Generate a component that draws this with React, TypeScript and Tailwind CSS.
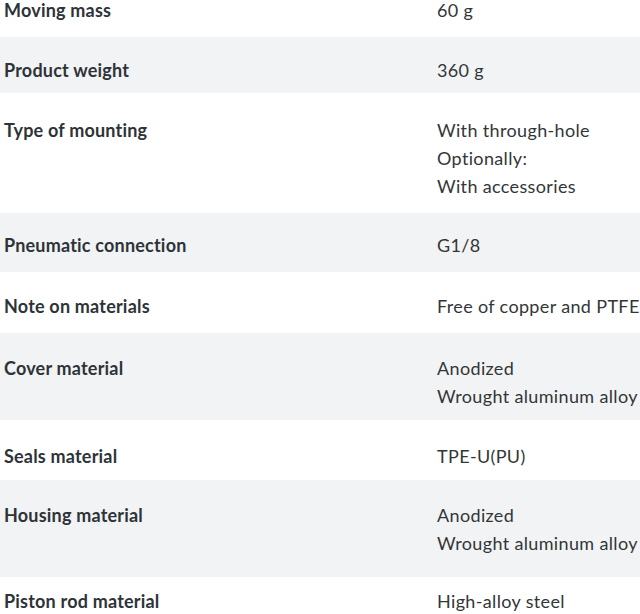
const ROWS = [
  { label: "Moving mass", value: ["60 g"], pad: "pt-0 pb-[13px]", bg: "bg-white" },
  { label: "Product weight", value: ["360 g"], pad: "pt-[19px] pb-[9px]", bg: "bg-[#f2f3f5]" },
  {
    label: "Type of mounting",
    value: ["With through-hole", "Optionally:", "With accessories"],
    pad: "pt-[23px] pb-[13px]",
    bg: "bg-white",
  },
  { label: "Pneumatic connection", value: ["G1/8"], pad: "pt-[18px] pb-[13px]", bg: "bg-[#f2f3f5]" },
  { label: "Note on materials", value: ["Free of copper and PTFE"], pad: "pt-[20px] pb-[13px]", bg: "bg-white" },
  {
    label: "Cover material",
    value: ["Anodized", "Wrought aluminum alloy"],
    pad: "pt-[21px] pb-[10px]",
    bg: "bg-[#f2f3f5]",
  },
  { label: "Seals material", value: ["TPE-U(PU)"], pad: "pt-[22px] pb-[10px]", bg: "bg-white" },
  {
    label: "Housing material",
    value: ["Anodized", "Wrought aluminum alloy"],
    pad: "pt-[21px] pb-[20px]",
    bg: "bg-[#f2f3f5]",
  },
  { label: "Piston rod material", value: ["High-alloy steel"], pad: "pt-[10px] pb-[13px]", bg: "bg-white" },
]

export default function App() {
  return (
    <main className="h-[614px] w-[640px] overflow-hidden bg-white font-['Lato',sans-serif] text-[18px] leading-[28px]">
      <div className="-mt-[4px] flex flex-col">
        {ROWS.map((row) => (
          <div
            key={row.label}
            className={`grid grid-cols-[433px_1fr] pl-[4px] ${row.bg} ${row.pad}`}
          >
            <div className="font-bold tracking-[0.2px] text-[#2e3338]">{row.label}</div>
            <div className="flex flex-col whitespace-nowrap tracking-[0.35px] text-[#333638]">
              {row.value.map((line) => (
                <span key={line}>{line}</span>
              ))}
            </div>
          </div>
        ))}
      </div>
    </main>
  )
}
